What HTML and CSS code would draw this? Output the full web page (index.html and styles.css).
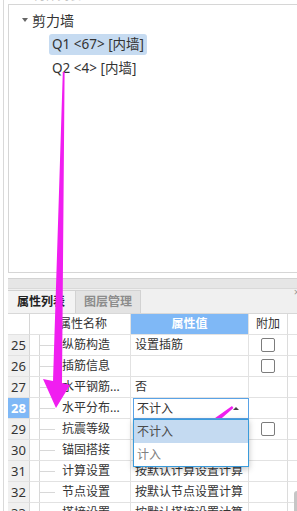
FILE: index.html
```html
<!DOCTYPE html>
<html lang="zh">
<head>
  <meta charset="UTF-8" />
  <title>属性列表</title>
  <link rel="stylesheet" href="styles.css">
</head>
<body>
  <div class="frame">
    <div class="caption"><span>构件列表</span></div>

    <div class="tree">
      <div class="node group"><span class="caret"></span>剪力墙</div>
      <div class="node leaf"><span class="label selected">Q1 &lt;67&gt; [内墙]</span></div>
      <div class="node leaf"><span class="label">Q2 &lt;4&gt; [内墙]</span></div>
    </div>

    <div class="panel-bar"><span class="close">×</span></div>

    <div class="tabs">
      <div class="tab active">属性列表</div>
      <div class="tab">图层管理</div>
    </div>

    <div class="grid">
      <div class="cell head num"></div>
      <div class="cell head title">属性名称</div>
      <div class="cell head value-head">属性值</div>
      <div class="cell head extra">附加</div>
      <div class="cell head rest"></div>

      <div class="cell num">25</div>
      <div class="cell name">纵筋构造</div>
      <div class="cell value">设置插筋</div>
      <div class="cell extra"><span class="check"></span></div>
      <div class="cell rest"></div>

      <div class="cell num">26</div>
      <div class="cell name">插筋信息</div>
      <div class="cell value"></div>
      <div class="cell extra"><span class="check"></span></div>
      <div class="cell rest"></div>

      <div class="cell num">27</div>
      <div class="cell name">水平钢筋...</div>
      <div class="cell value">否</div>
      <div class="cell extra"></div>
      <div class="cell rest"></div>

      <div class="cell num current">28</div>
      <div class="cell name">水平分布...</div>
      <div class="cell value editing">不计入
        <div class="dropdown">
          <div class="option picked">不计入</div>
          <div class="option">计入</div>
        </div>
      </div>
      <div class="cell extra"></div>
      <div class="cell rest"></div>

      <div class="cell num">29</div>
      <div class="cell name">抗震等级</div>
      <div class="cell value"></div>
      <div class="cell extra"><span class="check"></span></div>
      <div class="cell rest"></div>

      <div class="cell num">30</div>
      <div class="cell name">锚固搭接</div>
      <div class="cell value"></div>
      <div class="cell extra"></div>
      <div class="cell rest"></div>

      <div class="cell num">31</div>
      <div class="cell name">计算设置</div>
      <div class="cell value">按默认计算设置计算</div>
      <div class="cell extra"></div>
      <div class="cell rest"></div>

      <div class="cell num">32</div>
      <div class="cell name">节点设置</div>
      <div class="cell value">按默认节点设置计算</div>
      <div class="cell extra"></div>
      <div class="cell rest"></div>

      <div class="cell num">33</div>
      <div class="cell name">搭接设置</div>
      <div class="cell value">按默认搭接设置计算</div>
      <div class="cell extra"></div>
      <div class="cell rest"></div>

      <div class="scroll-thumb"></div>
    </div>
  </div>

  <!-- annotation arrows drawn over the screenshot -->
  <svg class="marks" width="297" height="511" viewBox="0 0 297 511">
    <polygon points="62.8,72 64.6,72 62,383 70,385 56,408 43,379 53,381" fill="#f01ef0"/>
    <polygon points="232,406 233.4,408 195,441.5 203,447 176,453 181,431 189,436.5" fill="#f01ef0"/>
  </svg>
</body>
</html>
```

FILE: styles.css
```css
body {
  margin: 0;
  font-family: "Noto Sans", "Noto Sans CJK SC", sans-serif;
  color: #333;
  background: #fff;
  overflow: hidden;
}
.frame {
  height: 511px;
  margin-left: 3px;
  border-left: 1px solid #d9d9d9;
  padding-left: 4px;
  overflow: hidden;
}
.caption {
  height: 4px;
  overflow: hidden;
  padding-left: 25px;
}
.caption span {
  display: block;
  margin-top: -11px;
  font-size: 12px;
  line-height: 14px;
  color: #c4c4c4;
}

/* tree */
.tree {
  box-sizing: border-box;
  height: 269px;
  border-top: 1px solid #d6d6d6;
  border-left: 1px solid #d6d6d6;
  border-bottom: 1px solid #d6d6d6;
  padding-top: 3px;
  font-size: 14px;
}
.node {
  height: 24px;
  display: flex;
  align-items: center;
}
.group {
  padding-left: 13px;
}
.caret {
  width: 0;
  height: 0;
  border-left: 3px solid transparent;
  border-right: 3px solid transparent;
  border-top: 4px solid #666;
  margin-right: 4px;
}
.leaf {
  padding-left: 40px;
}
.label {
  font-size: 13.5px;
  line-height: 21px;
  padding: 0 3px;
  border-radius: 3px;
}
.label.selected {
  background: #c6dbf1;
}

/* property panel */
.panel-bar {
  box-sizing: border-box;
  height: 11px;
  margin-top: 5px;
  background: #e6e6e6;
  border-top: 1px solid #d3d3d3;
  border-bottom: 1px solid #d9d9d9;
  text-align: right;
}
.close {
  display: inline-block;
  margin-right: -3px;
  font-size: 11px;
  line-height: 9px;
  color: #999;
}
.tabs {
  display: flex;
  height: 24px;
  background: #f0f0f0;
}
.tab {
  box-sizing: border-box;
  padding: 0 8px;
  font-size: 12px;
  font-weight: bold;
  line-height: 22px;
  margin-top: 1px;
  border: 1px solid #d2d2d2;
  border-bottom: none;
  color: #8c8c8c;
  background: #e3e3e3;
}
.tab.active {
  width: 67px;
  color: #222;
  background: #f3f3f3;
  border-left: none;
  border-right: none;
  padding-left: 9px;
}

.grid {
  position: relative;
  display: grid;
  grid-template-columns: 22px 101px 118px 39px 1fr;
  grid-auto-rows: 21px;
  border-top: 1px solid #d8d8d8;
  font-size: 12px;
}
.cell {
  box-sizing: border-box;
  border-right: 1px solid #e2e2e2;
  border-bottom: 1px solid #e2e2e2;
  line-height: 20px;
  white-space: nowrap;
  overflow: hidden;
}
.head {
  background: #fff;
}
.title {
  text-align: center;
  padding-left: 6px;
}
.value-head {
  background: #7fb8f6;
  color: #fff;
  font-weight: bold;
  text-align: center;
}
.num {
  background: #f0f0f0;
  border-right-color: #d6d6d6;
  text-align: center;
  font-size: 13px;
}
.head.num {
  background: #fff;
}
.num.current {
  background: #7fb8f6;
  color: #fff;
  font-weight: bold;
}
.name {
  position: relative;
  padding-left: 32px;
}
.name::before {
  content: "";
  position: absolute;
  left: 9px;
  top: 0;
  bottom: -1px;
  width: 1px;
  background: #d8d8d8;
}
.name::after {
  content: "";
  position: absolute;
  left: 10px;
  top: 10px;
  width: 15px;
  height: 1px;
  background: #d8d8d8;
}
.value {
  padding-left: 4px;
}
.extra {
  text-align: center;
  border-right-color: #dcdcdc;
}
.rest {
  border-right: none;
}
.check {
  display: inline-block;
  box-sizing: border-box;
  width: 14px;
  height: 14px;
  margin-top: 3px;
  vertical-align: top;
  border: 1px solid #7c7c7c;
  border-radius: 2px;
  background: #fff;
}

/* open combo on row 28 */
.editing {
  position: relative;
  overflow: visible;
  z-index: 2;
  margin-left: 2px;
  padding-left: 3px;
  border: 1px solid #5aa3e6;
  line-height: 19px;
}
.editing::after {
  content: "";
  position: absolute;
  right: 9px;
  top: 8px;
  border-left: 3px solid transparent;
  border-right: 3px solid transparent;
  border-bottom: 3px solid #444;
}
.dropdown {
  position: absolute;
  left: -1px;
  right: -1px;
  top: 20px;
  box-sizing: border-box;
  height: 48px;
  background: #fff;
  border: 1px solid #3a9bdb;
  box-shadow: 0 2px 6px rgba(0, 0, 0, 0.25);
}
.option {
  height: 23px;
  line-height: 23px;
  padding-left: 3px;
  color: #808080;
}
.option.picked {
  background: #c4daf1;
  color: #4a4a4a;
}
.scroll-thumb {
  position: absolute;
  left: 286px;
  top: 177px;
  width: 6px;
  height: 30px;
  border-radius: 3px;
  background: #c6c6c6;
}

.marks {
  position: absolute;
  left: 0;
  top: 0;
  pointer-events: none;
}
```
